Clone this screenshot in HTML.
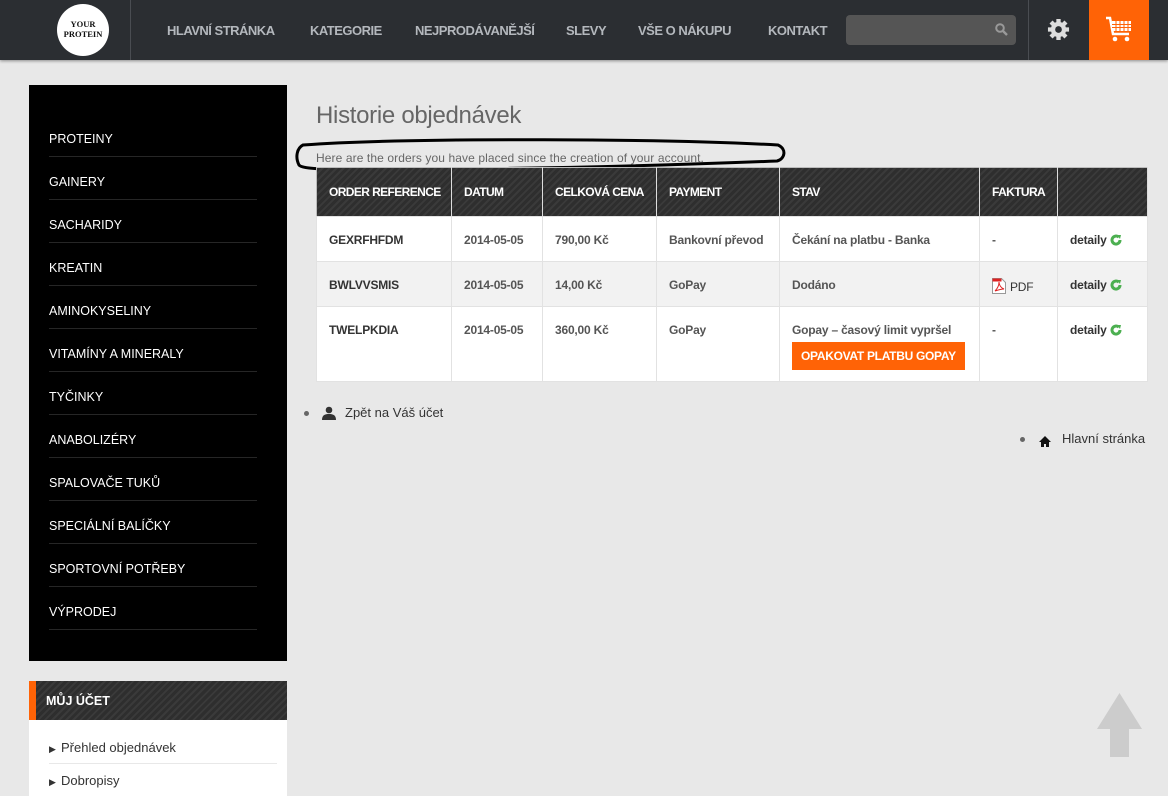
<!DOCTYPE html>
<html><head><meta charset="utf-8"><style>
*{margin:0;padding:0;box-sizing:border-box}
body{width:1168px;height:796px;overflow:hidden;background:#e8e8e8;font-family:"Liberation Sans",sans-serif;position:relative}
.hdr{position:absolute;left:0;top:0;width:1168px;height:60px;background:#2b2e32;box-shadow:0 1px 3px rgba(0,0,0,.4)}
.logo{position:absolute;left:57px;top:4px;width:52px;height:52px;border-radius:50%;background:#fff;text-align:center;font-family:"Liberation Serif",serif;font-weight:bold;font-size:8.5px;line-height:10px;padding-top:15px;color:#111}
.vd{position:absolute;top:0;width:1px;height:60px;background:#4a4d52}
.nav{position:absolute;top:23px;font-size:13px;font-weight:bold;color:#b4b8bd;letter-spacing:-.5px}
.srch{position:absolute;left:846px;top:15px;width:170px;height:30px;background:#555;border-radius:4px}
.cart{position:absolute;left:1089px;top:0;width:60px;height:60px;background:#ff6306}
.side{position:absolute;left:29px;top:85px;width:258px;height:576px;background:#000}
.side div{position:absolute;left:20px;width:208px;height:43px;border-bottom:1px solid #262626;color:#fff;font-size:12.5px;line-height:16px;padding-top:17px}
.strip{background:repeating-linear-gradient(135deg,#2e2e2e 0 3px,#3a3a3a 3px 5px)}
.acc{position:absolute;left:29px;top:681px;width:258px;height:39px;border-left:7px solid #ff6306;color:#fff;font-weight:bold;font-size:12.5px;line-height:41px;padding-left:10px}
.accb{position:absolute;left:29px;top:720px;width:258px;height:76px;background:#fff}
.accb div{position:absolute;left:20px;width:228px;font-size:13px;color:#333;padding-left:0}
h1{position:absolute;left:316px;top:102px;font-size:24px;font-weight:normal;color:#666;letter-spacing:-.3px}
.sub{position:absolute;left:316px;top:151px;font-size:12px;color:#666;letter-spacing:.1px}
table{position:absolute;left:316px;top:167px;width:832px;border-collapse:collapse;font-size:12px;border:1px solid #bbb}
th{height:49px;color:#fff;text-align:left;padding-left:12px;font-size:12px;border-right:1px solid #ddd;letter-spacing:-.6px}
td{padding-left:12px;border:1px solid #e2e2e2;color:#555;font-weight:bold;vertical-align:top;padding-top:16px;letter-spacing:-.2px}
tr.r{height:45px}
.btn{display:inline-block;background:#ff6306;color:#fff;padding:7px 9px;margin-top:5px;font-size:12px;letter-spacing:-.3px}
.det{color:#333}
.lk{position:absolute;font-size:13px;color:#333}
.dot{position:absolute;width:5px;height:5px;border-radius:50%;background:#666}
</style></head><body>
<div class="hdr">
<div class="logo">YOUR<br>PROTEIN</div>
<div class="vd" style="left:130px"></div>
<div class="nav" style="left:167px">HLAVNÍ STRÁNKA</div>
<div class="nav" style="left:310px">KATEGORIE</div>
<div class="nav" style="left:415px">NEJPRODÁVANĚJŠÍ</div>
<div class="nav" style="left:566px">SLEVY</div>
<div class="nav" style="left:638px">VŠE O NÁKUPU</div>
<div class="nav" style="left:768px">KONTAKT</div>
<div class="srch"><svg style="position:absolute;left:149px;top:8px" width="13" height="13" viewBox="0 0 13 13"><circle cx="5" cy="5" r="3.8" fill="none" stroke="#999" stroke-width="2"/><path d="M8 8l4 4" stroke="#999" stroke-width="2.4"/></svg></div>
<div class="vd" style="left:1028px"></div>
<svg style="position:absolute;left:1047px;top:18px" width="23" height="23" viewBox="0 0 24 24"><g fill="#ddd"><circle cx="12" cy="12" r="8"/><g stroke="#ddd" stroke-width="4.5"><path d="M12 1v22M1 12h22M4.2 4.2l15.6 15.6M19.8 4.2L4.2 19.8"/></g></g><circle cx="12" cy="12" r="3.5" fill="#2b2e32"/></svg>
<div class="cart"><svg style="position:absolute;left:16px;top:16px" width="28" height="28" viewBox="0 0 28 28"><path d="M1 2h4l3 16h16" fill="none" stroke="#fff" stroke-width="2.5"/><rect x="7" y="5" width="19" height="10" fill="#fff"/><g stroke="#ff6306" stroke-width="1"><path d="M7 8.5h19M7 11.5h19M11 5v10M15 5v10M19 5v10M23 5v10"/></g><circle cx="10" cy="23" r="2.3" fill="#fff"/><circle cx="22" cy="23" r="2.3" fill="#fff"/></svg></div>
</div>
<div class="side">
<div style="top:29px">PROTEINY</div><div style="top:72px">GAINERY</div><div style="top:115px">SACHARIDY</div><div style="top:158px">KREATIN</div><div style="top:201px">AMINOKYSELINY</div><div style="top:244px">VITAMÍNY A MINERALY</div><div style="top:287px">TYČINKY</div><div style="top:330px">ANABOLIZÉRY</div><div style="top:373px">SPALOVAČE TUKŮ</div><div style="top:416px">SPECIÁLNÍ BALÍČKY</div><div style="top:459px">SPORTOVNÍ POTŘEBY</div><div style="top:502px">VÝPRODEJ</div>
</div>
<div class="acc strip">MŮJ ÚČET</div>
<div class="accb">
<div style="top:20px;border-bottom:1px solid #e8e8e8;height:24px"><span style="font-size:9px;display:inline-block;width:12px">▶</span>Přehled objednávek</div>
<div style="top:53px"><span style="font-size:9px;display:inline-block;width:12px">▶</span>Dobropisy</div>
</div>
<h1>Historie objednávek</h1>
<svg style="position:absolute;left:295px;top:135px" width="492" height="42"><path d="M8 10 C120 2 380 4 483 10 C492 14 490 24 482 26 C380 30 250 34 120 34 C60 34 8 36 4 30 C0 22 2 13 8 10Z" fill="none" stroke="#000" stroke-width="3"/></svg>
<div class="sub">Here are the orders you have placed since the creation of your account.</div>
<table>
<tr class="strip"><th style="width:135px">ORDER REFERENCE</th><th style="width:91px">DATUM</th><th style="width:114px">CELKOVÁ CENA</th><th style="width:123px">PAYMENT</th><th style="width:200px">STAV</th><th style="width:78px">FAKTURA</th><th></th></tr>
<tr class="r" style="background:#fff"><td style="color:#333">GEXRFHFDM</td><td>2014-05-05</td><td>790,00 Kč</td><td>Bankovní převod</td><td>Čekání na platbu - Banka</td><td>-</td><td class="det">detaily <svg width="12" height="12" viewBox="0 0 12 12" style="vertical-align:-2px"><path d="M10 6a4 4 0 1 1-1.2-2.8" fill="none" stroke="#4caf50" stroke-width="3"/><path d="M7 1l4 0-1 4z" fill="#4caf50"/></svg></td></tr>
<tr class="r" style="background:#f2f2f2"><td style="color:#333">BWLVVSMIS</td><td>2014-05-05</td><td>14,00 Kč</td><td>GoPay</td><td>Dodáno</td><td style="color:#333;font-weight:normal"><svg width="14" height="16" viewBox="0 0 14 16" style="vertical-align:-3px;margin-right:4px"><path d="M.5.5h9l4 4v11H.5z" fill="#fff" stroke="#999"/><path d="M.5.5h9v3H.5z" fill="#d22"/><path d="M3 13c3-3 4-6 4-9 0 3 2 6 5 7-3 0-6 1-9 2" fill="none" stroke="#d22"/></svg>PDF</td><td class="det">detaily <svg width="12" height="12" viewBox="0 0 12 12" style="vertical-align:-2px"><path d="M10 6a4 4 0 1 1-1.2-2.8" fill="none" stroke="#4caf50" stroke-width="3"/><path d="M7 1l4 0-1 4z" fill="#4caf50"/></svg></td></tr>
<tr style="height:75px;background:#fff"><td style="color:#333">TWELPKDIA</td><td>2014-05-05</td><td>360,00 Kč</td><td>GoPay</td><td>Gopay – časový limit vypršel<br><span class="btn">OPAKOVAT PLATBU GOPAY</span></td><td>-</td><td class="det">detaily <svg width="12" height="12" viewBox="0 0 12 12" style="vertical-align:-2px"><path d="M10 6a4 4 0 1 1-1.2-2.8" fill="none" stroke="#4caf50" stroke-width="3"/><path d="M7 1l4 0-1 4z" fill="#4caf50"/></svg></td></tr>
</table>
<div class="dot" style="left:304px;top:411px"></div>
<svg style="position:absolute;left:322px;top:406px" width="14" height="14" viewBox="0 0 14 14"><circle cx="7" cy="4" r="3.3" fill="#333"/><path d="M0 14c0-5 3-6 7-6s7 1 7 6z" fill="#333"/></svg>
<div class="lk" style="left:345px;top:405px">Zpět na Váš účet</div>
<div class="dot" style="left:1020px;top:437px"></div>
<svg style="position:absolute;left:1039px;top:436px" width="12" height="11" viewBox="0 0 12 11"><path d="M6 0L0 6h2v5h3V8h2v3h3V6h2z" fill="#111"/></svg>
<div class="lk" style="left:1062px;top:431px">Hlavní stránka</div>
<svg style="position:absolute;left:1097px;top:693px" width="45" height="64" viewBox="0 0 45 64"><path d="M22.5 0L45 36H32v28H13V36H0z" fill="#ccc"/></svg>
</body></html>
